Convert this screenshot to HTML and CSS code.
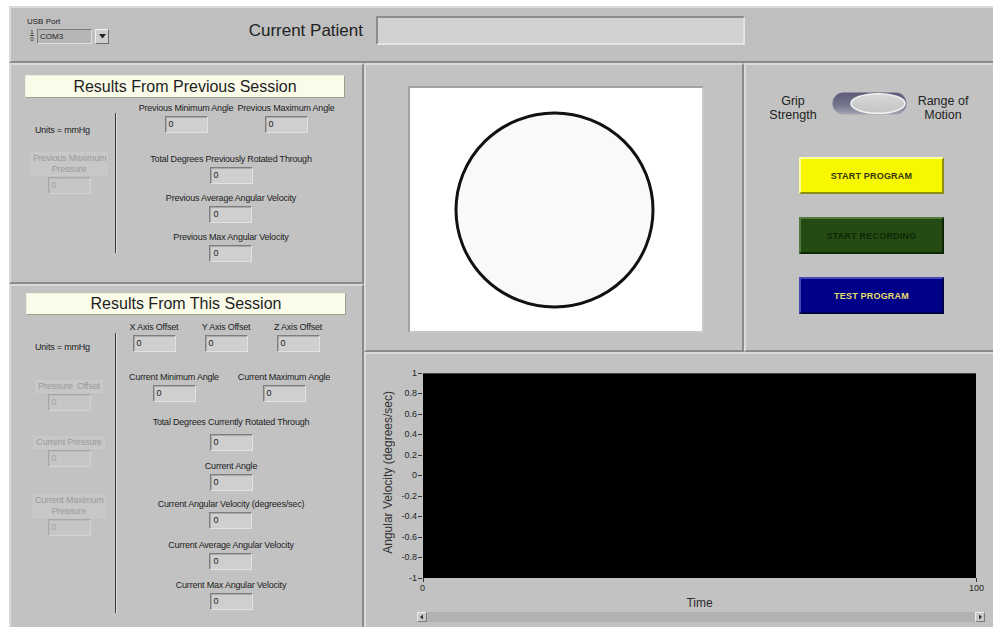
FILE: index.html
```html
<!DOCTYPE html>
<html lang="en">
<head>
<meta charset="utf-8">
<title>Rehabilitation Monitor</title>
<link rel="stylesheet" href="styles.css">
</head>
<body>
<div class="app">
  <header class="panel topbar">
    <div class="port">
      <div class="port-label">USB Port</div>
      <div class="combo">
        <span class="radix"><i>1</i><i>0</i></span>
        <span class="combo-value">COM3</span>
        <span class="combo-btn"><svg width="7" height="5" viewBox="0 0 7 5"><path d="M0 0h7L3.5 4.5z" fill="#222"/></svg></span>
      </div>
    </div>
    <div class="patient-label">Current Patient</div>
    <div class="patient-box"></div>
  </header>

  <main class="board">
    <div class="results">
      <section class="panel session session-prev">
        <h2 class="session-title">Results From Previous Session</h2>
        <div class="session-body">
          <div class="side">
            <div class="units">Units = mmHg</div>
            <div class="dim-field dim-prev-max">
              <div class="dim-label">Previous Maximum<br>Pressure</div>
              <div class="num num-dim">0</div>
            </div>
          </div>
          <div class="rule"></div>
          <div class="fields">
            <div class="pair">
              <div class="field"><div class="field-label">Previous Minimum Angle</div><div class="num">0</div></div>
              <div class="field"><div class="field-label">Previous Maximum Angle</div><div class="num">0</div></div>
            </div>
            <div class="field"><div class="field-label">Total Degrees Previously Rotated Through</div><div class="num">0</div></div>
            <div class="field"><div class="field-label">Previous Average Angular Velocity</div><div class="num">0</div></div>
            <div class="field"><div class="field-label">Previous Max Angular Velocity</div><div class="num">0</div></div>
          </div>
        </div>
      </section>

      <section class="panel session session-now">
        <h2 class="session-title">Results From This Session</h2>
        <div class="session-body">
          <div class="side">
            <div class="units">Units = mmHg</div>
            <div class="dim-field dim-offset">
              <div class="dim-label">Pressure&nbsp; Offset</div>
              <div class="num num-dim">0</div>
            </div>
            <div class="dim-field dim-current">
              <div class="dim-label">Current Pressure</div>
              <div class="num num-dim">0</div>
            </div>
            <div class="dim-field dim-cur-max">
              <div class="dim-label">Current Maximum<br>Pressure</div>
              <div class="num num-dim">0</div>
            </div>
          </div>
          <div class="rule"></div>
          <div class="fields">
            <div class="trio">
              <div class="field"><div class="field-label">X Axis Offset</div><div class="num">0</div></div>
              <div class="field"><div class="field-label">Y Axis Offset</div><div class="num">0</div></div>
              <div class="field"><div class="field-label">Z Axis Offset</div><div class="num">0</div></div>
            </div>
            <div class="pair pair-now">
              <div class="field"><div class="field-label">Current Minimum Angle</div><div class="num">0</div></div>
              <div class="field"><div class="field-label">Current Maximum Angle</div><div class="num">0</div></div>
            </div>
            <div class="field field-loose"><div class="field-label">Total Degrees Currently Rotated Through</div><div class="num">0</div></div>
            <div class="field"><div class="field-label">Current Angle</div><div class="num">0</div></div>
            <div class="field"><div class="field-label">Current Angular Velocity (degrees/sec)</div><div class="num">0</div></div>
            <div class="field"><div class="field-label">Current Average Angular Velocity</div><div class="num">0</div></div>
            <div class="field"><div class="field-label">Current Max Angular Velocity</div><div class="num">0</div></div>
          </div>
        </div>
      </section>
    </div>

    <section class="panel shape-view">
      <div class="canvas">
        <svg width="292" height="243" viewBox="0 0 292 243">
          <ellipse cx="144.5" cy="122" rx="98.5" ry="97" fill="#f9f9f9" stroke="#111" stroke-width="3"/>
        </svg>
      </div>
    </section>

    <section class="panel controls">
      <div class="mode">
        <div class="mode-label">Grip<br>Strength</div>
        <svg class="toggle" width="75" height="23" viewBox="0 0 75 23">
          <defs>
            <linearGradient id="track" x1="0" y1="0" x2="0" y2="1">
              <stop offset="0" stop-color="#5c5c78"/>
              <stop offset="0.6" stop-color="#76768e"/>
              <stop offset="1" stop-color="#a4a4b4"/>
            </linearGradient>
            <linearGradient id="knob" x1="0" y1="0" x2="0" y2="1">
              <stop offset="0" stop-color="#d8d8d8"/>
              <stop offset="1" stop-color="#c4c4c4"/>
            </linearGradient>
          </defs>
          <rect x="0.5" y="0.5" width="74" height="22" rx="11" fill="url(#track)"/>
          <ellipse cx="46" cy="11.5" rx="27" ry="9.8" fill="url(#knob)" stroke="#f2f2f2" stroke-width="1.6"/>
        </svg>
        <div class="mode-label mode-right">Range of<br>Motion</div>
      </div>
      <div class="buttons">
        <button class="btn btn-start">START PROGRAM</button>
        <button class="btn btn-record">START RECORDING</button>
        <button class="btn btn-test">TEST PROGRAM</button>
      </div>
    </section>

    <section class="panel chart-panel">
      <div class="chart">
        <div class="y-title">Angular Velocity (degrees/sec)</div>
        <div class="y-ticks">
          <span>1</span><span>0.8</span><span>0.6</span><span>0.4</span><span>0.2</span><span>0</span>
          <span>-0.2</span><span>-0.4</span><span>-0.6</span><span>-0.8</span><span>-1</span>
        </div>
        <div class="plot"></div>
        <div class="x-ticks"><span>0</span><span>100</span></div>
        <div class="x-title">Time</div>
        <div class="scrollbar">
          <span class="scroll-btn"><svg width="6" height="6" viewBox="0 0 6 6"><path d="M4 0.5v5L1 3z" fill="#333"/></svg></span>
          <span class="scroll-btn"><svg width="6" height="6" viewBox="0 0 6 6"><path d="M2 0.5v5L5 3z" fill="#333"/></svg></span>
        </div>
      </div>
    </section>
  </main>
</div>
</body>
</html>
```

FILE: styles.css
```css
* { box-sizing: border-box; }

body {
  margin: 0;
  background: #fff;
  font-family: "Liberation Sans", Arial, sans-serif;
  color: #1c1c1c;
}

.app {
  margin: 6px 0 0 9px;
  width: 984px;
  height: 621px;
  background: #c0c0c0;
  display: flex;
  flex-direction: column;
  overflow: hidden;
}

/* raised front-panel frame */
.panel {
  background: #c2c2c2;
  border: 2px solid;
  border-color: #dadada #8a8a8a #8a8a8a #dadada;
}

/* ---------- top bar ---------- */
.topbar {
  height: 57px;
  flex: none;
  display: flex;
  align-items: flex-start;
  padding-left: 16px;
  border-right-width: 0;
  background: #bfbfbf;
}

.port { width: 83px; padding-top: 9px; }

.port-label { font-size: 8px; line-height: 10px; color: #222; }

.combo { margin-top: 1px; height: 16px; display: flex; align-items: center; }

.radix {
  width: 10px;
  height: 15px;
  display: flex;
  flex-direction: column;
  align-items: center;
  font-size: 6px;
  line-height: 7px;
  color: #222;
}
.radix i { font-style: normal; }
.radix i:first-child { border-bottom: 1px solid #444; line-height: 6px; }

.combo-value {
  width: 55px;
  height: 15px;
  background: #b6b6b6;
  border: 1px solid;
  border-color: #7c7c7c #dcdcdc #dcdcdc #7c7c7c;
  font-size: 8px;
  line-height: 13px;
  padding-left: 2px;
  color: #222;
}

.combo-btn {
  margin-left: 3px;
  width: 14px;
  height: 15px;
  background: #cecece;
  border: 1px solid;
  border-color: #f2f2f2 #6c6c6c #6c6c6c #f2f2f2;
  display: flex;
  align-items: center;
  justify-content: center;
}

.patient-label {
  width: 253px;
  margin-top: 8px;
  text-align: right;
  font-size: 17px;
  line-height: 29px;
  color: #222;
}

.patient-box {
  margin: 8px 0 0 13px;
  width: 369px;
  height: 29px;
  background: #d2d2d2;
  border: 2px solid;
  border-color: #8c8c8c #e4e4e4 #e4e4e4 #8c8c8c;
}

/* ---------- main board ---------- */
.board {
  flex: 1;
  display: grid;
  grid-template-columns: 355px 380px 249px;
  grid-template-rows: 289px 275px;
}

.results {
  grid-row: 1 / 3;
  grid-column: 1;
  display: flex;
  flex-direction: column;
}

.session-prev { height: 221px; flex: none; }
.session-now { flex: 1; border-bottom-width: 0; }

.session-title {
  margin: 10px 0 0 14px;
  width: 320px;
  height: 23px;
  background: #fbfbea;
  border: 1px solid;
  border-color: #eeeedc #9e9e8a #9e9e8a #eeeedc;
  font-size: 16px;
  font-weight: normal;
  line-height: 21px;
  text-align: center;
  color: #1e1e1e;
}

.session-now .session-title {
  margin: 7px 0 0 15px;
  height: 22px;
  line-height: 20px;
}

.session-body { display: flex; }

.side {
  width: 104px;
  flex: none;
  display: flex;
  flex-direction: column;
  align-items: flex-start;
}

.units {
  margin: 27px 0 0 24px;
  font-size: 9px;
  line-height: 11px;
  letter-spacing: -0.2px;
  white-space: nowrap;
}

.dim-field {
  margin-left: 19px;
  width: 78px;
  display: flex;
  flex-direction: column;
  align-items: center;
}

.dim-label {
  padding: 0 2px;
  font-size: 9px;
  line-height: 11px;
  letter-spacing: -0.2px;
  text-align: center;
  white-space: nowrap;
  color: #9a9a9a;
  background: #c7c7c7;
  border: 1px solid #c9c9c9;
}

.dim-prev-max { margin-top: 16px; }
.dim-prev-max .dim-label { width: 78px; }
.dim-offset { margin-top: 27px; }
.dim-current { margin-top: 25px; }
.dim-cur-max { margin-top: 27px; }
.dim-cur-max .dim-label { width: 74px; }

.rule {
  flex: none;
  width: 1px;
  height: 140px;
  margin-top: 15px;
  background: #3c3c3c;
  box-shadow: 1px 0 0 #d8d8d8;
}

.session-now .rule { height: 280px; margin-top: 18px; }

.fields {
  width: 230px;
  display: flex;
  flex-direction: column;
  align-items: center;
}

.field {
  display: flex;
  flex-direction: column;
  align-items: center;
}

.field-label {
  font-size: 9px;
  line-height: 11px;
  letter-spacing: -0.2px;
  white-space: nowrap;
  color: #1c1c1c;
}

.num {
  width: 43px;
  height: 17px;
  margin-top: 2px;
  padding-left: 3px;
  background: #cfcfcf;
  border: 1px solid;
  border-color: #7e7e7e #e2e2e2 #e2e2e2 #7e7e7e;
  box-shadow: inset 1px 1px 0 #a9a9a9;
  font-size: 9px;
  line-height: 14px;
  color: #222;
}

.num-dim {
  margin-top: 1px;
  background: #c6c6c6;
  border-color: #a8a8a8 #d4d4d4 #d4d4d4 #a8a8a8;
  box-shadow: inset 1px 1px 0 #bababa;
  color: #a2a2a2;
}

.pair {
  align-self: stretch;
  display: grid;
  grid-template-columns: 100px 100px;
  padding-left: 20px;
}

.pair-now { grid-template-columns: 110px 110px; padding-left: 3px; }

.trio {
  align-self: stretch;
  display: grid;
  grid-template-columns: repeat(3, 72px);
  padding-left: 2px;
}

/* vertical rhythm of the previous-session column */
.session-prev .fields > :nth-child(1) { margin-top: 5px; }
.session-prev .fields > :nth-child(2) { margin-top: 21px; }
.session-prev .fields > :nth-child(3) { margin-top: 9px; }
.session-prev .fields > :nth-child(4) { margin-top: 9px; }

/* vertical rhythm of the current-session column */
.session-now .fields > :nth-child(1) { margin-top: 7px; }
.session-now .fields > :nth-child(2) { margin-top: 20px; }
.session-now .fields > :nth-child(3) { margin-top: 15px; }
.session-now .fields > :nth-child(4) { margin-top: 10px; }
.session-now .fields > :nth-child(5) { margin-top: 8px; }
.session-now .fields > :nth-child(6) { margin-top: 11px; }
.session-now .fields > :nth-child(7) { margin-top: 10px; }
.field-loose .num { margin-top: 6px; }

/* ---------- shape view ---------- */
.shape-view {
  grid-row: 1;
  grid-column: 2;
  padding: 21px 0 0 42px;
}

.canvas {
  width: 296px;
  height: 247px;
  background: #fff;
  border: 2px solid;
  border-color: #a2a2a2 #c8c8c8 #c8c8c8 #a2a2a2;
}
.canvas svg { display: block; }

/* ---------- controls ---------- */
.controls {
  grid-row: 1;
  grid-column: 3;
  border-right-width: 0;
  padding: 27px 0 0 17px;
}

.mode { display: flex; align-items: flex-start; }

.mode-label {
  width: 60px;
  margin-top: 2px;
  font-size: 12.5px;
  line-height: 14px;
  text-align: center;
  color: #222;
}

.toggle { margin-left: 9px; flex: none; display: block; }
.mode-right { width: 72px; }

.buttons {
  display: flex;
  flex-direction: column;
  gap: 23px;
  margin: 35px 0 0 36px;
}

.btn {
  width: 145px;
  height: 37px;
  padding: 0;
  border: 2px solid;
  font-family: "Liberation Sans", Arial, sans-serif;
  font-size: 9px;
  font-weight: bold;
  letter-spacing: 0.2px;
  display: flex;
  align-items: center;
  justify-content: center;
}

.btn-start {
  background: #f7f700;
  border-color: #ffffa0 #8e8e10 #8e8e10 #ffffa0;
  color: #34340c;
}

.btn-record {
  background: #244c12;
  border-color: #4e7a3c #0e2606 #0e2606 #4e7a3c;
  color: #0c2606;
}

.btn-test {
  background: #000088;
  border-color: #4646b8 #00004a #00004a #4646b8;
  color: #e6df6a;
}

/* ---------- chart ---------- */
.chart-panel {
  grid-row: 2;
  grid-column: 2 / 4;
  border-right-width: 0;
  border-bottom-width: 0;
  padding: 19px 0 0 10px;
}

.chart {
  display: grid;
  grid-template-columns: 24px 23px 553px;
  grid-template-rows: 205px auto auto auto;
}

.y-title {
  grid-row: 1;
  grid-column: 1;
  align-self: center;
  justify-self: center;
  margin-top: -6px;
  writing-mode: vertical-rl;
  transform: rotate(180deg);
  font-size: 12px;
  white-space: nowrap;
  color: #333;
}

.y-ticks {
  grid-row: 1;
  grid-column: 2;
  height: 216px;
  margin-top: -5.5px;
  display: flex;
  flex-direction: column;
  justify-content: space-between;
  align-items: flex-end;
}

.y-ticks span {
  position: relative;
  padding-right: 6px;
  font-size: 9px;
  line-height: 11px;
  color: #262626;
}

.y-ticks span::after {
  content: "";
  position: absolute;
  right: 1px;
  top: 5px;
  width: 4px;
  height: 1px;
  background: #333;
}

.plot {
  grid-row: 1;
  grid-column: 3;
  background: #000;
  border-top: 1px solid #444;
}

.x-ticks {
  grid-row: 2;
  grid-column: 3;
  margin-top: 5px;
  display: flex;
  justify-content: space-between;
  font-size: 9px;
  line-height: 11px;
  color: #262626;
}

.x-ticks span { position: relative; }
.x-ticks span:first-child { margin-left: -3px; }
.x-ticks span:last-child { margin-right: -8px; }

.x-ticks span::before {
  content: "";
  position: absolute;
  left: 50%;
  top: -5px;
  width: 1px;
  height: 4px;
  background: #333;
}

.x-title {
  grid-row: 3;
  grid-column: 3;
  margin-top: 2px;
  text-align: center;
  font-size: 12px;
  line-height: 14px;
  color: #2a2a2a;
}

.scrollbar {
  grid-row: 4;
  grid-column: 2 / 4;
  margin: 2px -9px 0 17px;
  height: 10px;
  background: #b2b2b2;
  display: flex;
  justify-content: space-between;
}

.scroll-btn {
  width: 10px;
  height: 10px;
  background: #c8c8c8;
  border: 1px solid;
  border-color: #ececec #7c7c7c #7c7c7c #ececec;
  display: flex;
  align-items: center;
  justify-content: center;
}
.scroll-btn svg { display: block; }
```
